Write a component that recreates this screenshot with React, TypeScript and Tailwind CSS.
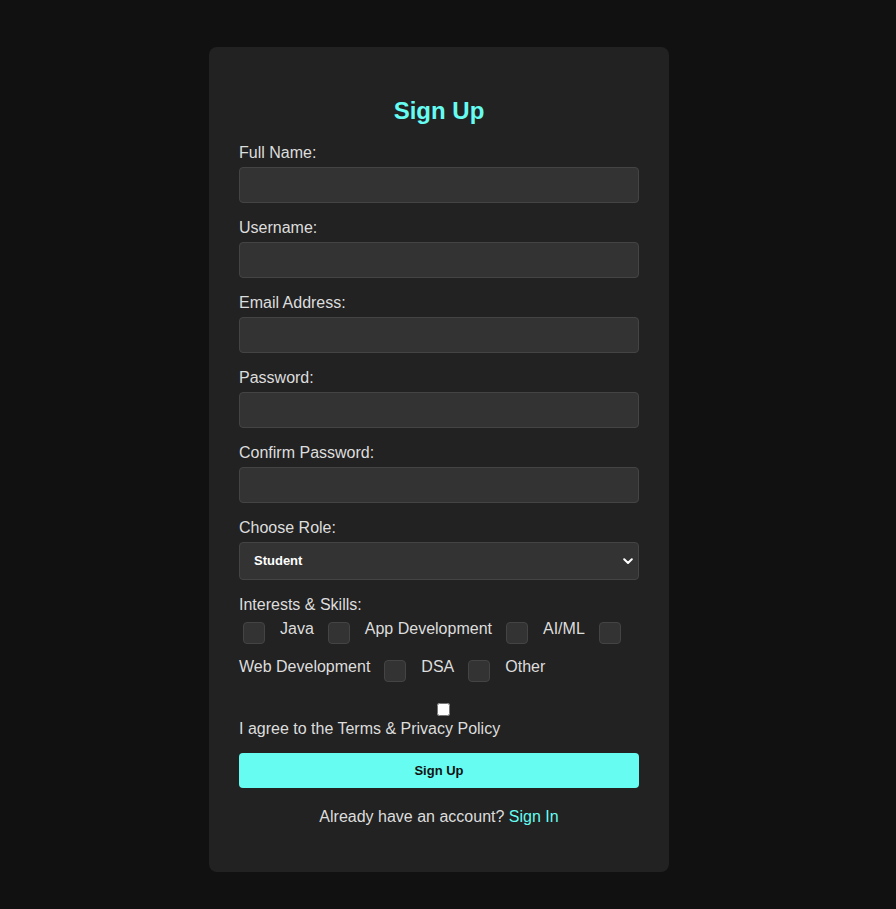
import { useState } from "react";

const fields = [
  { id: "fullName", label: "Full Name:", type: "text" },
  { id: "username", label: "Username:", type: "text" },
  { id: "email", label: "Email Address:", type: "email" },
  { id: "password", label: "Password:", type: "password" },
  { id: "confirm", label: "Confirm Password:", type: "password" },
];

const skills = ["Java", "App Development", "AI/ML", "Web Development", "DSA", "Other"];

export default function App() {
  const [role, setRole] = useState("student");

  return (
    <div className="min-h-screen bg-[#111] pt-[47px] pr-[18px] font-['Liberation_Sans',Arial,sans-serif] text-[#ddd]">
      <form className="mx-auto w-[460px] rounded-lg bg-[#222] p-[30px]">
        <h2 className="mt-[20px] mb-[18px] text-center text-2xl leading-[28px] font-bold text-[#66fcf1]">
          Sign Up
        </h2>

        {fields.map((f) => (
          <div key={f.id}>
            <label htmlFor={f.id} className="mb-[5px] block text-base leading-[19px]">
              {f.label}
            </label>
            <input
              id={f.id}
              type={f.type}
              className="mb-[15px] block h-[36px] w-full rounded border border-[#444] bg-[#333] px-[10px] text-white outline-none"
            />
          </div>
        ))}

        <label htmlFor="role" className="mb-[5px] block text-base leading-[19px]">
          Choose Role:
        </label>
        <div className="relative mb-[15px]">
          <select
            id="role"
            value={role}
            onChange={(e) => setRole(e.target.value)}
            className="block h-[38px] w-full appearance-none rounded border border-[#444] bg-[#333] pl-[14px] text-[13px] font-bold text-white outline-none"
          >
            <option value="student">Student</option>
            <option value="mentor">Mentor</option>
            <option value="admin">Admin</option>
          </select>
          <svg
            className="pointer-events-none absolute top-[16px] right-[6px]"
            width="10"
            height="7"
            viewBox="0 0 10 7"
            fill="none"
          >
            <path d="M1.2 1.2 5 5l3.8-3.8" stroke="white" strokeWidth="2" strokeLinecap="round" strokeLinejoin="round" />
          </svg>
        </div>

        <div className="mb-[5px] text-base leading-[19px]">Interests &amp; Skills:</div>
        <div className="flex flex-wrap items-start">
          {skills.map((s) => (
            <div key={s} className="contents">
              <input
                type="checkbox"
                className="mt-[3px] mb-[13px] ml-[4px] mr-[15px] h-[22px] w-[22px] shrink-0 appearance-none rounded border border-[#444] bg-[#333]"
              />
              <span className="mr-[10px] leading-[19px]">{s}</span>
            </div>
          ))}
        </div>

        <div className="mt-[8px] flex justify-center pl-[8px]">
          <input type="checkbox" className="m-0 h-[13px] w-[13px]" />
        </div>
        <div className="mt-[3px] text-base leading-[19px]">I agree to the Terms &amp; Privacy Policy</div>

        <button
          type="button"
          className="mt-[15px] block h-[35px] w-full rounded bg-[#66fcf1] text-[13px] font-bold text-[#111]"
        >
          Sign Up
        </button>

        <p className="mt-[19px] mb-[16px] text-center text-base leading-[19px]">
          Already have an account? <a className="text-[#66fcf1]">Sign In</a>
        </p>
      </form>
    </div>
  );
}
